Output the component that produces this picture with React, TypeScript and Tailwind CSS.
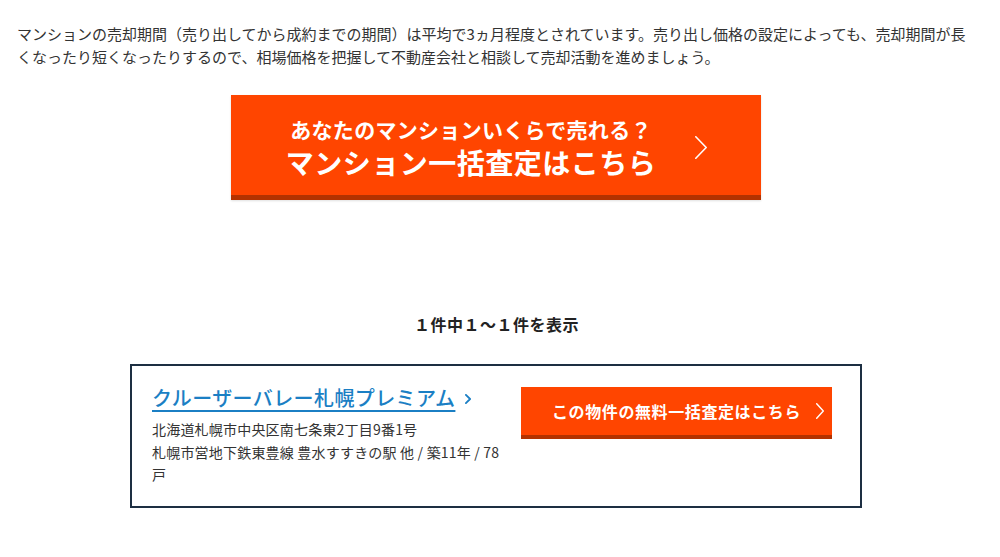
// マンション売却期間 + 一括査定バナー + 物件カード
const jp = { fontFamily: '"Noto Sans CJK JP", "Noto Sans", sans-serif' }

function Chevron({ w, h, stroke, className }: { w: number; h: number; stroke: number; className?: string }) {
  return (
    <svg width={w} height={h} viewBox={`0 0 ${w} ${h}`} fill="none" className={className}>
      <path
        d={`M${stroke / 2} ${stroke / 2} L${w - stroke / 2} ${h / 2} L${stroke / 2} ${h - stroke / 2}`}
        stroke="currentColor"
        strokeWidth={stroke}
        strokeLinecap="round"
        strokeLinejoin="round"
      />
    </svg>
  )
}

export default function App() {
  return (
    <div className="w-full min-h-[557px] bg-white text-[#333]" style={jp}>
      {/* 説明文 */}
      <p className="pt-[22px] pl-[17px] pr-[25px] text-[15px] leading-[23px]">
        マンションの売却期間（売り出してから成約までの期間）は平均で3ヵ月程度とされています。売り出し価格の設定によっても、売却期間が長くなったり短くなったりするので、相場価格を把握して不動産会社と相談して売却活動を進めましょう。
      </p>

      {/* 一括査定バナー */}
      <a
        href="#"
        className="mt-[27px] ml-[231px] w-[530px] h-[105px] flex items-center pt-[4px] pl-[54px] bg-[#ff4500] border-b-[5px] border-[#b33200] text-white shadow-[0_1px_2px_rgba(0,0,0,0.12)]"
      >
        <div className="w-[372px] text-center font-bold">
          <div className="text-[21px] leading-[30px] tracking-[0.3px]">あなたのマンションいくらで売れる？</div>
          <div className="text-[28px] leading-[36px] tracking-[0.5px]">マンション一括査定はこちら</div>
        </div>
        <Chevron w={12} h={23} stroke={1.6} className="ml-[38px]" />
      </a>

      {/* 件数 */}
      <div className="mt-[112px] text-center pr-[7px] text-[16px] leading-[24px] tracking-[0.5px] font-bold text-[#222]">
        １件中１～１件を表示
      </div>

      {/* 物件カード */}
      <div className="mt-[28px] ml-[130px] w-[732px] border-2 border-[#1d2f42] pt-[18px] pb-[20px] pl-[20px] pr-[28px] flex gap-[16px]">
        <div className="w-[353px]">
          <a href="#" className="flex items-center gap-[10px] text-[#1b7fc4]">
            <span className="text-[20px] leading-[28px] font-medium tracking-[0.4px] underline underline-offset-[4px] decoration-[1.5px]">
              クルーザーバレー札幌プレミアム
            </span>
            <Chevron w={6} h={10} stroke={1.8} className="mt-[2px]" />
          </a>
          <div className="mt-[6px] text-[14px] leading-[22.5px] tracking-[0.2px] text-[#333]">
            北海道札幌市中央区南七条東2丁目9番1号
            <br />
            札幌市営地下鉄東豊線 豊水すすきの駅 他 / 築11年 / 78戸
          </div>
        </div>
        <a
          href="#"
          className="mt-[3px] w-[311px] h-[52px] flex items-center pl-[31px] bg-[#ff4500] border-b-[4px] border-[#b33200] text-white font-bold text-[16px]"
        >
          <span className="tracking-[0.6px]">この物件の無料一括査定はこちら</span>
          <Chevron w={8} h={16} stroke={1.4} className="ml-[15px]" />
        </a>
      </div>
    </div>
  )
}
